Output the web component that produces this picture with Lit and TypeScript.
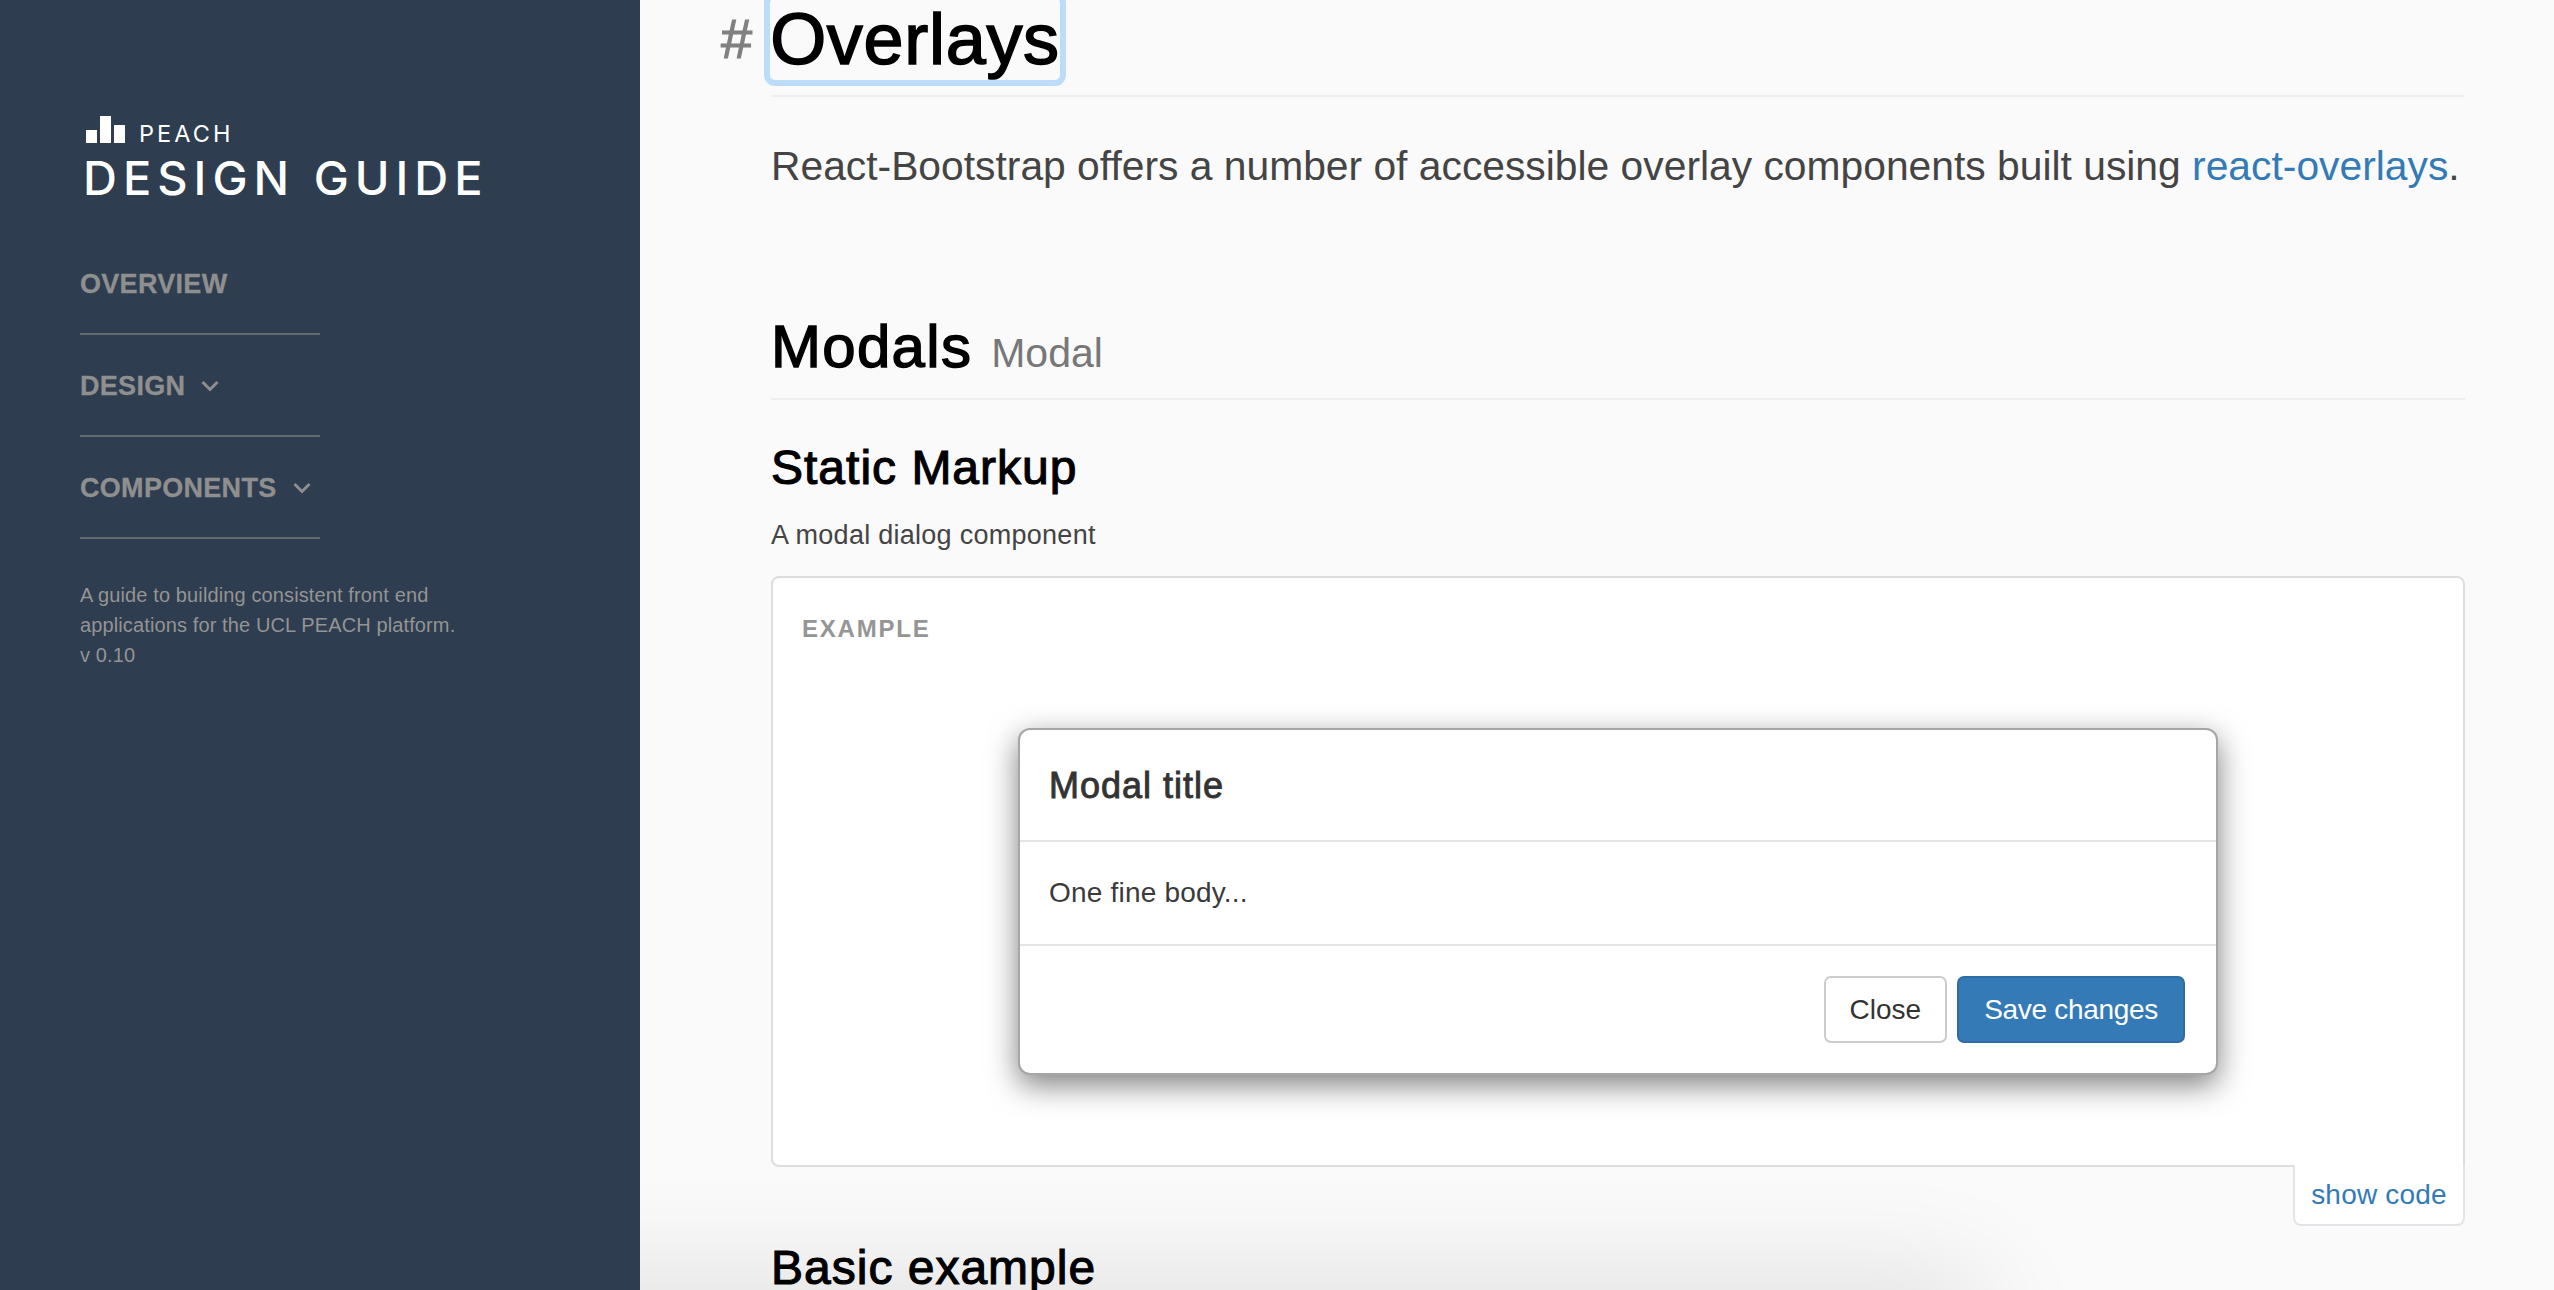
import { LitElement, html, css } from "lit";
import { customElement } from "lit/decorators.js";

const chevron = html`<svg class="chev" viewBox="0 0 18 12" width="18" height="12"><path d="M1.5 2 L9 9.5 L16.5 2" fill="none" stroke="#8e8e8e" stroke-width="3"/></svg>`;

@customElement("app-root")
export class AppRoot extends LitElement {
  static styles = css`
    :host { display: flex; width: 100%; height: 1290px; overflow: hidden; font-family: "Liberation Sans", Arial, sans-serif; background: #fafafa; color: #333; }
    .side { flex: 0 0 640px; background: #2e3d4f; padding: 116px 0 0 80px; box-sizing: border-box; position: relative; z-index: 2; }
    .logo { display: flex; align-items: flex-end; gap: 14px; margin-left: 6px; height: 27px; }
    .peach { font-family: Inter, sans-serif; font-size: 23.5px; line-height: 18px; letter-spacing: 3.1px; color: #fff; }
    .guide { font-family: Inter, sans-serif; font-size: 47px; line-height: 34px; font-weight: 500; letter-spacing: 6px; color: #fff; margin: 18px 0 0 3px; white-space: nowrap; }
    .nav { margin-top: 38px; width: 240px; }
    .item { height: 102px; box-sizing: border-box; border-bottom: 2px solid #656a70; padding-top: 2px; display: flex; align-items: center; gap: 16px; font-size: 27px; font-weight: 700; letter-spacing: .3px; -webkit-text-stroke: .3px #8f8f8f; color: #8f8f8f; white-space: nowrap; }
    .desc { margin-top: 41px; font-size: 20px; line-height: 30px; letter-spacing: .12px; color: #949494; white-space: nowrap; }

    .main { flex: 1; position: relative; padding: 0 89px 0 131px; box-sizing: border-box; min-width: 0; }
    .h1wrap { margin-top: -2px; padding-bottom: 15px; border-bottom: 2px solid #eee; }
    h1 { margin: 0 0 0 -51px; display: flex; gap: 18px; font-size: 72px; line-height: 82px; font-weight: 400; color: #000; }
    .hash { color: #808080; font-size: 56px; margin-left: 1px; -webkit-text-stroke: 1.2px #808080; }
    .sel { outline: 6px solid #bddcf9; border-radius: 5px; -webkit-text-stroke: 1.6px #000; letter-spacing: 0.7px; }
    .lead { margin: 41px 0 0; font-size: 40.8px; line-height: 56px; color: #444; white-space: nowrap; }
    a { color: #337ab7; text-decoration: none; }
    .h2wrap { margin-top: 120px; padding-bottom: 12px; border-bottom: 2px solid #eee; }
    h2 { margin: 0; font-size: 60px; line-height: 66px; font-weight: 400; letter-spacing: 1.3px; color: #000; -webkit-text-stroke: 1.4px #000; }
    h2 small { font-size: 41px; letter-spacing: 0; color: #777; margin-left: 1px; -webkit-text-stroke: 0; }
    h3 { margin: 0; font-size: 48px; line-height: 56px; font-weight: 400; letter-spacing: 1px; color: #000; -webkit-text-stroke: 1.1px #000; }
    .sm { margin-top: 40px; }
    .sub { margin: 19px 0 0; font-size: 27px; line-height: 40px; letter-spacing: .27px; color: #444; }
    .card { margin-top: 21px; height: 591px; border: 2px solid #ddd; border-radius: 8px 8px 0 8px; background: #fff; box-sizing: border-box; padding: 36px 0 0 29px; position: relative; }
    .label { font-size: 24px; line-height: 30px; font-weight: 700; letter-spacing: 1.8px; color: #959595; }
    .modal { margin: 84px 0 0 216px; width: 1200px; height: 347px; box-sizing: border-box; border: 2px solid rgba(0,0,0,.35); border-radius: 12px; background: #fff; box-shadow: 0 10px 30px rgba(0,0,0,.5); display: flex; flex-direction: column; }
    .mh { height: 112px; box-sizing: border-box; border-bottom: 2px solid #e5e5e5; padding: 2px 0 0 29px; display: flex; align-items: center; font-size: 36px; color: #333; -webkit-text-stroke: 0.9px #333; letter-spacing: 1px; }
    .mb { height: 104px; box-sizing: border-box; border-bottom: 2px solid #e5e5e5; padding-left: 29px; display: flex; align-items: center; font-size: 28px; letter-spacing: .2px; color: #3a3a3a; }
    .mf { flex: 1; display: flex; justify-content: flex-end; align-items: center; gap: 10px; padding: 0 31px 0 0; }
    button { font: inherit; font-size: 28px; line-height: 40px; height: 67px; box-sizing: border-box; padding: 0 24px; border: 2px solid #ccc; border-radius: 7px; background: #fff; color: #333; }
    button.primary { background: #337ab7; border-color: #2e6da4; color: #fff; padding: 0 25px; letter-spacing: -.3px; }
    .show { margin: -2px 0 0 auto; width: 172px; height: 61px; box-sizing: border-box; background: #fff; border: 2px solid #e3e3e8; border-top: 0; border-radius: 0 0 8px 8px; font-size: 28px; letter-spacing: .2px; display: flex; align-items: center; justify-content: center; position: relative; }
    .be { margin-top: 14px; }
    .fade { position: absolute; left: -300px; width: 1630px; bottom: -70px; height: 70px; box-shadow: 0 0 110px 10px rgba(0,0,0,.12); pointer-events: none; }
  `;

  render() {
    return html`
      <aside class="side">
        <div class="logo">
          <svg width="39" height="27" viewBox="0 0 39 27"><path fill="#fff" d="M0 14h11v13H0zM14 0h11v27H14zM28 9h11v18H28z"/></svg>
          <span class="peach">PEACH</span>
        </div>
        <div class="guide">DESIGN GUIDE</div>
        <nav class="nav">
          <div class="item">OVERVIEW</div>
          <div class="item">DESIGN ${chevron}</div>
          <div class="item">COMPONENTS ${chevron}</div>
        </nav>
        <div class="desc">A guide to building consistent front end<br />applications for the UCL PEACH platform.<br />v 0.10</div>
      </aside>
      <main class="main">
        <div class="h1wrap"><h1><span class="hash">#</span><span class="sel">Overlays</span></h1></div>
        <p class="lead">React-Bootstrap offers a number of accessible overlay components built using <a href="#">react-overlays</a>.</p>
        <div class="h2wrap"><h2>Modals <small>Modal</small></h2></div>
        <h3 class="sm">Static Markup</h3>
        <p class="sub">A modal dialog component</p>
        <section class="card">
          <div class="label">EXAMPLE</div>
          <div class="modal">
            <div class="mh">Modal title</div>
            <div class="mb">One fine body...</div>
            <div class="mf"><button>Close</button><button class="primary">Save changes</button></div>
          </div>
        </section>
        <div class="show"><a href="#">show code</a></div>
        <h3 class="be">Basic example</h3>
        <div class="fade"></div>
      </main>
    `;
  }
}
